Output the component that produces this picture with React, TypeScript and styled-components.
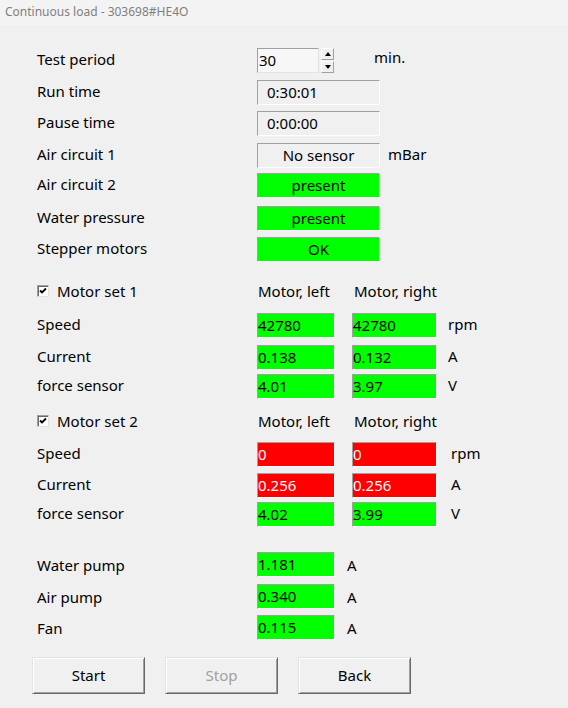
import React from 'react';
import styled, {createGlobalStyle, css} from "styled-components";

const GlobalStyle = createGlobalStyle`
  html, body {
    margin: 0;
    padding: 0;
    background: #f0f0f0;
  }
  body {
    font-family: "Noto Sans", "Open Sans", sans-serif;
    font-size: 15px;
    color: #000;
  }
`;

const Window = styled.div`
  width: 568px;
  height: 708px;
  background: #f0f0f0;
  overflow: hidden;
`;

const TitleBar = styled.div`
  height: 27px;
  background: #f3f3f3;
  border-bottom: 1px solid #ececec;
  box-sizing: border-box;
  padding-left: 5px;
  display: flex;
  align-items: center;
  padding-bottom: 3px;
  font-size: 12px;
  color: #808080;
`;

const Body = styled.div`
  padding: 21px 0 0 37px;
`;

const Row = styled.div<{ $gap?: number }>`
  display: flex;
  align-items: center;
  height: 25px;
  margin-top: ${p => p.$gap ?? 0}px;
`;

const Label = styled.div<{ $low?: boolean }>`
  width: 220px;
  flex: none;
  padding-bottom: ${p => p.$low ? 0 : 3}px;
  padding-top: ${p => p.$low ? 1 : 0}px;
  white-space: nowrap;
`;

const Unit = styled.div<{ $left: number; $raise?: number }>`
  margin-left: ${p => p.$left}px;
  padding-bottom: ${p => p.$raise ?? 3}px;
  white-space: nowrap;
`;

type Tone = 'plain' | 'green' | 'red';

const Field = styled.div<{ $w: number; $tone?: Tone; $align?: string; $pad?: number }>`
  box-sizing: border-box;
  width: ${p => p.$w}px;
  height: 25px;
  flex: none;
  display: flex;
  align-items: center;
  justify-content: ${p => p.$align === 'center' ? 'center' : 'flex-start'};
  padding-left: ${p => p.$pad ?? 0}px;
  padding-bottom: 1px;
  border: 1px solid;
  border-color: #a0a0a0 #ffffff #ffffff #a0a0a0;
  white-space: nowrap;
  ${p => p.$tone === 'green' && css`
    background: #00ff00;
    color: #000;
  `}
  ${p => p.$tone === 'red' && css`
    background: #ff0000;
    color: #fff;
  `}
`;

const Input = styled(Field)`
  background: #f7f7f7;
  border-color: #a0a0a0 #e3e3e3 #e3e3e3 #a0a0a0;
`;

const Spinner = styled.div`
  margin-left: 2px;
  width: 13px;
  height: 25px;
  display: flex;
  flex-direction: column;
  gap: 1px;
`;

const SpinButton = styled.div`
  flex: 1;
  box-sizing: border-box;
  border: 1px solid;
  border-color: #ffffff #a0a0a0 #a0a0a0 #ffffff;
  background: #f0f0f0;
  display: flex;
  align-items: center;
  justify-content: center;
`;

const Arrow = styled.div<{ $down?: boolean }>`
  width: 0;
  height: 0;
  border-left: 3px solid transparent;
  border-right: 3px solid transparent;
  ${p => p.$down
    ? css`border-top: 4px solid #000;`
    : css`border-bottom: 4px solid #000;`}
`;

const CheckLabel = styled.div`
  width: 220px;
  flex: none;
  display: flex;
  align-items: center;
  gap: 8px;
  padding-bottom: 1px;
`;

const CheckBox = styled.div`
  box-sizing: border-box;
  width: 12px;
  height: 12px;
  background: #fff;
  border: 1px solid;
  border-color: #a0a0a0 #e3e3e3 #e3e3e3 #a0a0a0;
  box-shadow: inset 1px 1px 0 #696969;
  display: flex;
  align-items: center;
  justify-content: center;
`;

const ColHead = styled.div<{ $w: number }>`
  width: ${p => p.$w}px;
  flex: none;
  padding-left: 1px;
  white-space: nowrap;
  padding-bottom: 1px;
`;

const Pair = styled.div`
  display: flex;
  gap: 17px;
`;

const Buttons = styled.div`
  display: flex;
  gap: 20px;
  margin: 17px 0 0 -5px;
`;

const Button = styled.div<{ $disabled?: boolean }>`
  box-sizing: border-box;
  width: 113px;
  height: 37px;
  display: flex;
  align-items: center;
  justify-content: center;
  padding-bottom: 2px;
  background: #f0f0f0;
  border: 1px solid;
  border-color: #e3e3e3 #696969 #696969 #e3e3e3;
  box-shadow: inset 1px 1px 0 #ffffff, inset -1px -1px 0 #a0a0a0;
  color: ${p => p.$disabled ? '#a0a0a0' : '#000'};
`;

const Check = () => (
  <svg width="8" height="8" viewBox="0 0 8 8">
    <path d="M1 3.5 L3 5.5 L7 1.5" fill="none" stroke="#000" strokeWidth="1.8"/>
  </svg>
);

type MotorValue = { v: string; tone: Tone };

const MotorRow = ({label, left, right, unit, gap, unitGap}: {
  label: string; left: MotorValue; right: MotorValue; unit: string; gap: number; unitGap: number;
}) => (
  <Row $gap={gap}>
    <Label>{label}</Label>
    <Pair>
      <Field $w={78} $tone={left.tone}>{left.v}</Field>
      <Field $w={85} $tone={right.tone}>{right.v}</Field>
    </Pair>
    <Unit $left={unitGap}>{unit}</Unit>
  </Row>
);

const MotorHeader = ({name, gap}: { name: string; gap: number }) => (
  <Row $gap={gap}>
    <CheckLabel>
      <CheckBox><Check/></CheckBox>
      {name}
    </CheckLabel>
    <ColHead $w={95}>Motor, left</ColHead>
    <ColHead $w={100}>Motor, right</ColHead>
  </Row>
);

const App = () => {
  const g = (v: string): MotorValue => ({v, tone: 'green'});
  const r = (v: string): MotorValue => ({v, tone: 'red'});

  return (
    <Window>
      <GlobalStyle/>
      <TitleBar>Continuous load - 303698#HE4O</TitleBar>
      <Body>
        <Row>
          <Label>Test period</Label>
          <Input $w={62} $pad={1}>30</Input>
          <Spinner>
            <SpinButton><Arrow/></SpinButton>
            <SpinButton><Arrow $down/></SpinButton>
          </Spinner>
          <Unit $left={40} $raise={7}>min.</Unit>
        </Row>
        <Row $gap={7}>
          <Label>Run time</Label>
          <Field $w={123} $pad={9}>0:30:01</Field>
        </Row>
        <Row $gap={6}>
          <Label>Pause time</Label>
          <Field $w={123} $pad={9}>0:00:00</Field>
        </Row>
        <Row $gap={7}>
          <Label>Air circuit 1</Label>
          <Field $w={123} $align="center">No sensor</Field>
          <Unit $left={8}>mBar</Unit>
        </Row>
        <Row $gap={5}>
          <Label>Air circuit 2</Label>
          <Field $w={123} $align="center" $tone="green">present</Field>
        </Row>
        <Row $gap={8}>
          <Label>Water pressure</Label>
          <Field $w={123} $align="center" $tone="green">present</Field>
        </Row>
        <Row $gap={6}>
          <Label>Stepper motors</Label>
          <Field $w={123} $align="center" $tone="green">OK</Field>
        </Row>

        <MotorHeader name="Motor set 1" gap={17}/>
        <MotorRow label="Speed" left={g('42780')} right={g('42780')} unit="rpm" gap={9} unitGap={11}/>
        <MotorRow label="Current" left={g('0.138')} right={g('0.132')} unit="A" gap={7} unitGap={11}/>
        <MotorRow label="force sensor" left={g('4.01')} right={g('3.97')} unit="V" gap={4} unitGap={11}/>

        <MotorHeader name="Motor set 2" gap={10}/>
        <MotorRow label="Speed" left={r('0')} right={r('0')} unit="rpm" gap={8} unitGap={14}/>
        <MotorRow label="Current" left={r('0.256')} right={r('0.256')} unit="A" gap={6} unitGap={14}/>
        <MotorRow label="force sensor" left={g('4.02')} right={g('3.99')} unit="V" gap={4} unitGap={14}/>

        <Row $gap={25}>
          <Label $low>Water pump</Label>
          <Field $w={78} $tone="green">1.181</Field>
          <Unit $left={12} $raise={0}>A</Unit>
        </Row>
        <Row $gap={7}>
          <Label $low>Air pump</Label>
          <Field $w={78} $tone="green">0.340</Field>
          <Unit $left={12} $raise={0}>A</Unit>
        </Row>
        <Row $gap={6}>
          <Label $low>Fan</Label>
          <Field $w={78} $tone="green">0.115</Field>
          <Unit $left={12} $raise={0}>A</Unit>
        </Row>

        <Buttons>
          <Button>Start</Button>
          <Button $disabled>Stop</Button>
          <Button>Back</Button>
        </Buttons>
      </Body>
    </Window>
  );
};

export default App;
